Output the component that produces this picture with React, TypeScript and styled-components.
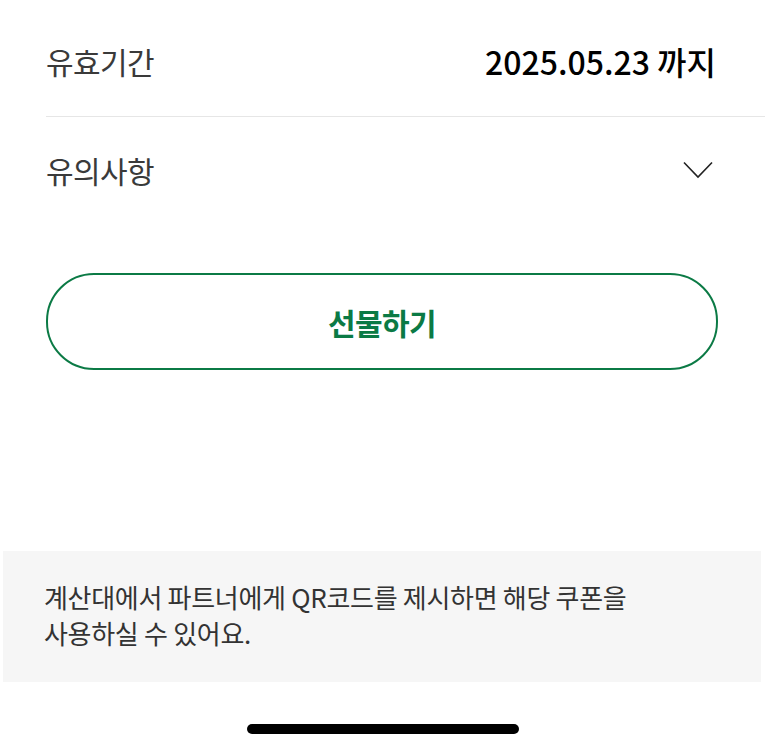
import styled, { createGlobalStyle } from 'styled-components';

const GlobalStyle = createGlobalStyle`
    html, body {
        margin: 0;
        padding: 0;
        background: #ffffff;
    }

    body {
        font-family: "Noto Sans CJK KR", "Noto Sans", sans-serif;
        -webkit-font-smoothing: antialiased;
    }
`;

const Page = styled.div`
    width: 765px;
    height: 750px;
    display: flex;
    flex-direction: column;
    background: #ffffff;
    overflow: hidden;
`;

const InfoList = styled.div`
    margin-left: 46px;
    padding-top: 5px;
    display: flex;
    flex-direction: column;
`;

const InfoRow = styled.div<{ $divider?: boolean; $height: number }>`
    height: ${(props) => props.$height}px;
    display: flex;
    align-items: center;
    justify-content: space-between;
    padding-right: 49px;
    border-bottom: ${(props) => (props.$divider ? '1px solid #e6e6e6' : 'none')};
`;

const Label = styled.span`
    font-size: 30px;
    color: #3a3a3a;
    letter-spacing: -0.6px;
`;

const Value = styled.span`
    font-size: 32px;
    font-weight: 450;
    color: #000000;
    letter-spacing: 0;
`;

const Chevron = styled.svg`
    width: 30px;
    height: 18px;
    margin-right: 3px;
`;

const GiftButton = styled.button`
    margin: 51px 0 0 46px;
    width: 672px;
    height: 97px;
    border: 2px solid #0b7a45;
    border-radius: 48px;
    background: #ffffff;
    color: #0b7a45;
    font-family: inherit;
    font-size: 30px;
    font-weight: 700;
    letter-spacing: -0.6px;
    cursor: pointer;
`;

const Notice = styled.div`
    margin: 181px 4px 0 3px;
    height: 131px;
    box-sizing: border-box;
    padding: 28px 0 0 41px;
    background: #f6f6f6;
    font-size: 26px;
    line-height: 36px;
    color: #333333;
    letter-spacing: -0.3px;
`;

const HomeIndicator = styled.div`
    margin: 42px auto 0;
    width: 272px;
    height: 10px;
    border-radius: 5px;
    background: #000000;
`;

const App = () => {
    return (
        <Page>
            <GlobalStyle />
            <InfoList>
                <InfoRow $divider $height={111}>
                    <Label>유효기간</Label>
                    <Value>2025.05.23 까지</Value>
                </InfoRow>
                <InfoRow $height={105}>
                    <Label>유의사항</Label>
                    <Chevron viewBox="0 0 30 18" fill="none">
                        <path d="M1 1.5 L15 16 L29 1.5" stroke="#222" strokeWidth="1.6" />
                    </Chevron>
                </InfoRow>
            </InfoList>
            <GiftButton type={'button'}>선물하기</GiftButton>
            <Notice>
                계산대에서 파트너에게 QR코드를 제시하면 해당 쿠폰을
                <br />
                사용하실 수 있어요.
            </Notice>
            <HomeIndicator />
        </Page>
    );
};

export default App;
